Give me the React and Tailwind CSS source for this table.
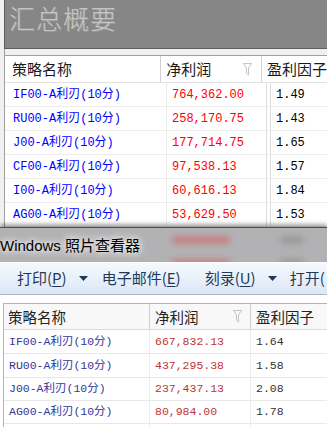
import React from "react";

const mono = "font-['Liberation_Mono','Noto_Sans_CJK_SC',monospace]";
const cjk = "font-['Noto_Sans_CJK_SC',sans-serif]";

const topRows = [
  ["IF00-A利刃(10分)", "764,362.00", "1.49"],
  ["RU00-A利刃(10分)", "258,170.75", "1.43"],
  ["J00-A利刃(10分)", "177,714.75", "1.65"],
  ["CF00-A利刃(10分)", "97,538.13", "1.57"],
  ["I00-A利刃(10分)", "60,616.13", "1.84"],
  ["AG00-A利刃(10分)", "53,629.50", "1.53"],
];

const bottomRows = [
  ["IF00-A利刃(10分)", "667,832.13", "1.64", "h-[24px]"],
  ["RU00-A利刃(10分)", "437,295.38", "1.58", "h-[24px]"],
  ["J00-A利刃(10分)", "237,437.13", "2.08", "h-[23px]"],
  ["AG00-A利刃(10分)", "80,984.00", "1.78", "h-[23px]"],
  ["", "", "", "h-[23px]"],
];

function Funnel() {
  return (
    <svg width="9" height="13" viewBox="0 0 9 13" className="shrink-0">
      <path d="M0.5 0.5 H8.5 L5.5 5 V12 L3.5 10.5 V5 Z" fill="none" stroke="#c4c4c4" strokeWidth="1" />
    </svg>
  );
}

function Caret() {
  return (
    <svg width="9" height="5" viewBox="0 0 9 5" className="shrink-0">
      <path d="M0 0 H9 L4.5 5 Z" fill="#1e395b" />
    </svg>
  );
}

export default function App() {
  return (
    <div className="relative w-[327px] h-[427px] overflow-hidden bg-white">
      {/* upper screenshot: summary grid */}
      <div className="h-[227px] overflow-hidden bg-[#f0f0f0]">
        <div className="h-[49px] bg-[#868686] border-l border-b border-[#5e5e5e] ml-[4px] pl-[4px]">
          <div className={`${cjk} text-[26px] leading-[36px] font-light text-[#c6c6c6] tracking-[1px] [text-shadow:1px_1px_0_#9a9a9a]`}>汇总概要</div>
        </div>
        <div className="h-[6px] border-l border-[#a0a0a0] ml-[4px]" />
        <div className="ml-[4px] border-l border-t border-[#a0a0a0] bg-white">
          <div className={`${cjk} flex h-[27px] items-center text-[15px] text-[#1a1a1a] border-b border-[#e2e2e2]`}>
            <div className="w-[162px] h-full flex items-center pl-[7px] border-r border-[#d0d0d0]">策略名称</div>
            <div className="w-[104px] h-full flex items-center justify-between pl-[5px] pr-[9px] border-r border-[#d0d0d0]">
              <span>净利润</span>
              <Funnel />
            </div>
            <div className="flex-1 h-full flex items-center pl-[5px] whitespace-nowrap">盈利因子</div>
          </div>
          {topRows.map((r) => (
            <div key={r[0]} className={`${mono} flex h-[24px] items-center text-[12px] border-b border-[#ececec]`}>
              <div className="w-[162px] h-full flex items-center pl-[8px] text-[#0000ff] border-r border-[#ececec] whitespace-nowrap">{r[0]}</div>
              <div className="w-[100px] h-full flex items-center pl-[5px] text-[#ff0000] border-r border-[#dcdcdc]">{r[1]}</div>
              <div className="w-[4px] h-full border-r border-[#dcdcdc]" />
              <div className="flex-1 h-full flex items-center pl-[5px] text-black">{r[2]}</div>
            </div>
          ))}
        </div>
      </div>

      {/* photo viewer title bar, glass shows the grid blurred behind it */}
      <div className="relative z-10 h-[35px] bg-[#b2b2b4] border-t border-[#4c4c4c] shadow-[0_-3px_4px_rgba(0,0,0,0.35)] overflow-hidden">
        <div className="absolute inset-0 blur-[3px]">
          <div className="flex h-[20px] items-center pt-[4px]">
            <div className="w-[160px]" />
            <div className="ml-[12px] w-[58px] h-[8px] rounded-sm bg-[#d85050] opacity-50" />
            <div className="ml-[50px] w-[24px] h-[8px] rounded-sm bg-[#808080] opacity-50" />
          </div>
          <div className="flex h-[20px] items-center pt-[10px]">
            <div className="w-[160px]" />
            <div className="ml-[12px] w-[58px] h-[8px] rounded-sm bg-[#d85050] opacity-50" />
            <div className="ml-[50px] w-[24px] h-[8px] rounded-sm bg-[#808080] opacity-50" />
          </div>
        </div>
        <div className="relative flex h-full items-center pt-[3px]">
          <span className="font-['Liberation_Sans','Noto_Sans_CJK_SC',sans-serif] text-[15px] text-black [text-shadow:0_0_6px_#fff,0_0_10px_#fff]">Windows 照片查看器</span>
        </div>
      </div>

      {/* toolbar */}
      <div className={`${cjk} relative z-10 flex h-[33px] items-center pl-[17px] text-[15px] text-[#1e395b] border-t border-white border-b border-b-[#a6b6cc] bg-gradient-to-b from-[#f5f9fd] to-[#dce7f5] whitespace-nowrap`}>
        <span>打印(<span className="underline underline-offset-2">P</span>)</span>
        <span className="ml-[12px]"><Caret /></span>
        <span className="ml-[14px]">电子邮件(<span className="underline underline-offset-2">E</span>)</span>
        <span className="ml-[24px]">刻录(<span className="underline underline-offset-2">U</span>)</span>
        <span className="ml-[12px]"><Caret /></span>
        <span className="ml-[13px]">打开(</span>
      </div>

      {/* lower screenshot: summary grid */}
      <div className="pt-[8px] bg-white">
        <div className="ml-[3px] border-l border-t border-[#b4b4b4]">
          <div className={`${cjk} flex h-[26px] items-center text-[14.5px] text-[#222] bg-[#f8f8f8] border-b border-[#dcdcdc]`}>
            <div className="w-[146px] h-full flex items-center pl-[4px] border-r border-[#cfcfcf]">策略名称</div>
            <div className="w-[101px] h-full flex items-center justify-between pl-[5px] pr-[8px] border-r border-[#cfcfcf]">
              <span>净利润</span>
              <Funnel />
            </div>
            <div className="flex-1 h-full flex items-center pl-[5px] whitespace-nowrap">盈利因子</div>
          </div>
          {bottomRows.map((r, i) => (
            <div key={i} className={`${mono} flex ${r[3]} items-center text-[11.5px] border-b border-[#e8e8e8]`}>
              <div className="w-[146px] h-full flex items-center pl-[5px] text-[#34359a] border-r border-[#ececec] whitespace-nowrap">{r[0]}</div>
              <div className="w-[101px] h-full flex items-center pl-[5px] text-[#c23434] border-r border-[#ececec]">{r[1]}</div>
              <div className="flex-1 h-full flex items-center pl-[5px] text-[#333]">{r[2]}</div>
            </div>
          ))}
        </div>
      </div>
    </div>
  );
}
